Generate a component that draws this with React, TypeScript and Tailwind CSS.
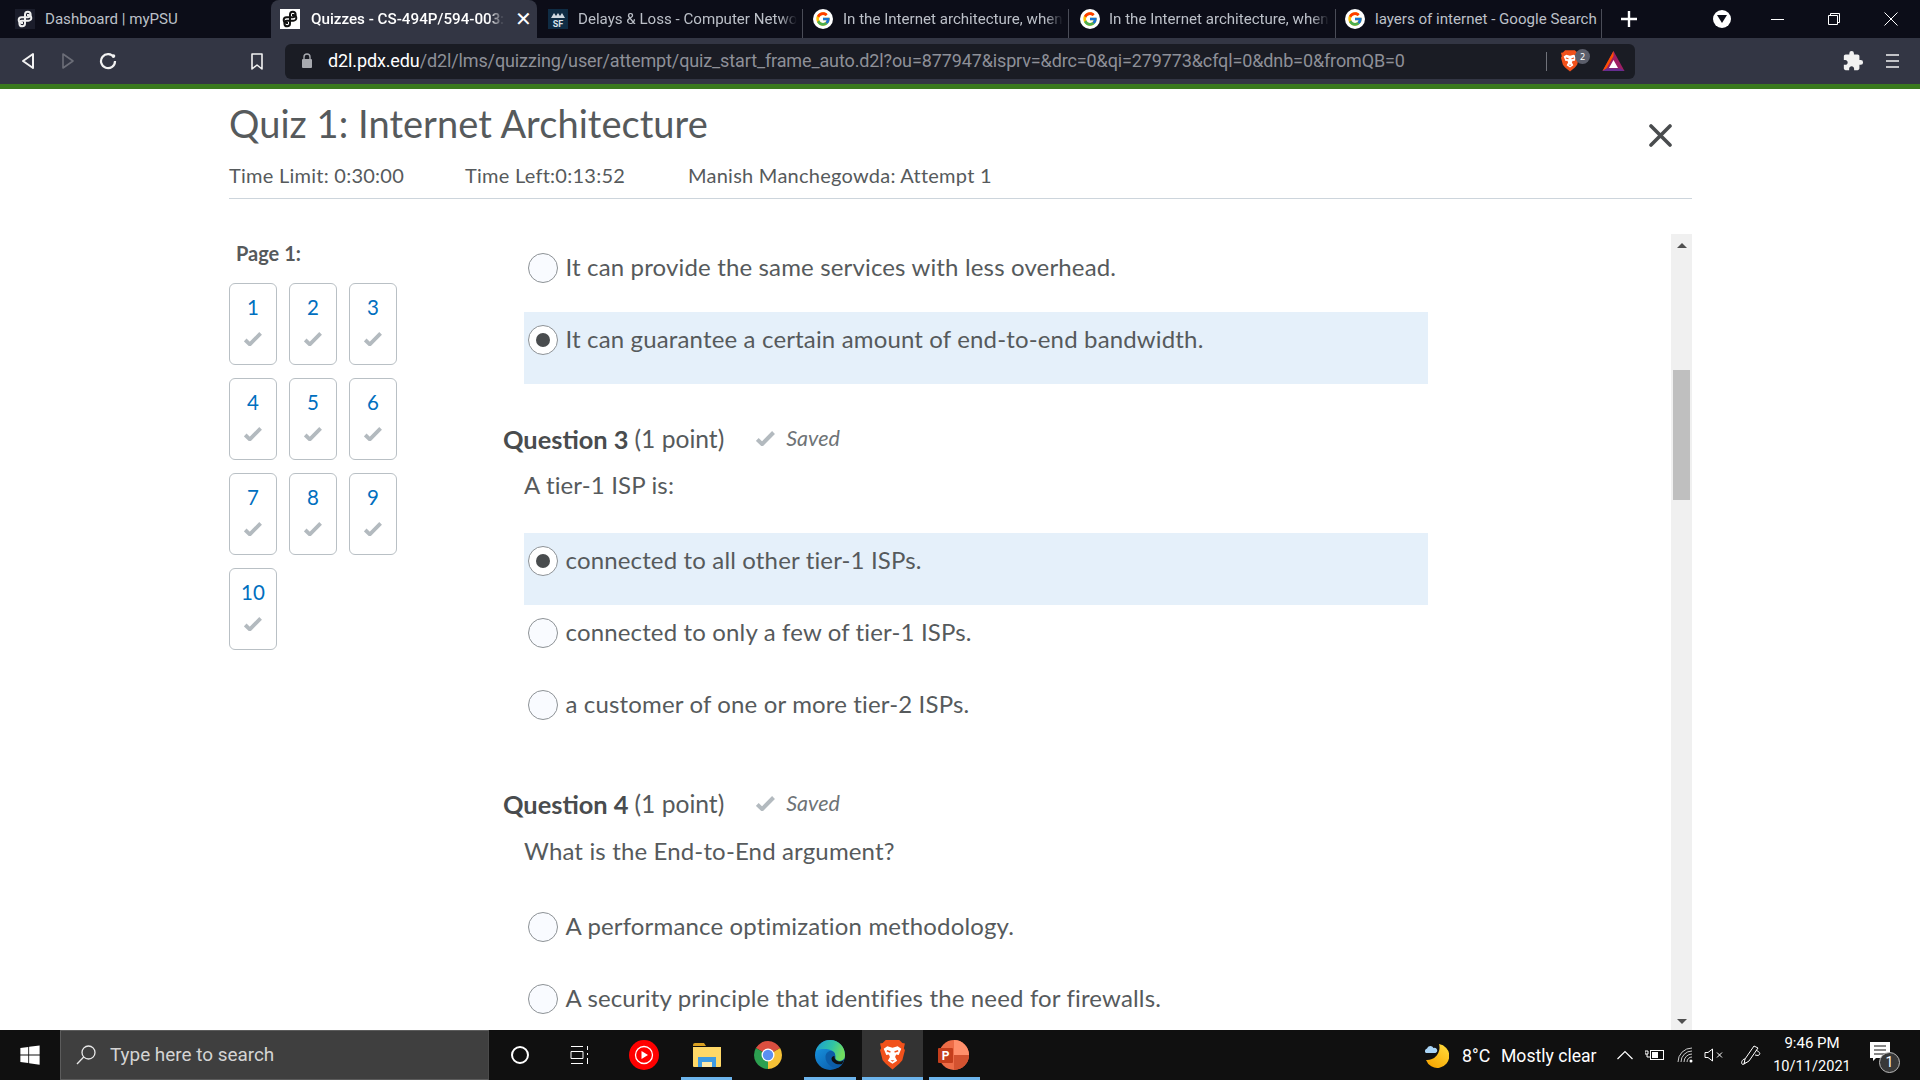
import React from "react";
import { FcGoogle } from "react-icons/fc";
import { FaWindows } from "react-icons/fa";
import { MdExtension } from "react-icons/md";

const lato = "font-['Lato','Open_Sans',sans-serif]";
const ui = "font-['Roboto','Noto_Sans',sans-serif]";

function PsuLogo({ color, bg, size = 20 }: { color: string; bg: string; size?: number }) {
  return (
    <svg width={size} height={size} viewBox="0 0 20 20" style={{ background: bg }} className="shrink-0">
      <g fill="none" stroke={color} strokeWidth="2">
        <path d="M10 11V5.500a2.800 2.800 0 1 1 3 2.800H6.500a2.800 2.800 0 1 0 0 5.600H8" />
        <path d="M10 9v5.500a2.800 2.800 0 1 1-3-2.800h6.500a2.800 2.800 0 1 0 0-5.600H12" />
      </g>
    </svg>
  );
}

function SfIcon() {
  return (
    <svg width="20" height="20" viewBox="0 0 20 20" className="shrink-0">
      <rect width="20" height="20" fill="#0f2c44" />
      <path d="M3 9l3-5 2 3 2-3 2 3 2-3 3 5z" fill="#cfd8e0" />
      <text x="10" y="18" textAnchor="middle" fontSize="9" fontWeight="700" fill="#d7e2ea" fontFamily="Roboto">SF</text>
    </svg>
  );
}

function G() {
  return (
    <span className="w-[20px] h-[20px] rounded-full bg-white flex items-center justify-center shrink-0">
      <FcGoogle size={16} />
    </span>
  );
}

function Tab({ w, pl, gap, icon, title, active, close, sep, fade }: { w: number; pl: number; gap: number; icon: React.ReactNode; title: string; active?: boolean; close?: boolean; sep?: boolean; fade?: boolean }) {
  return (
    <div
      style={{ width: w, paddingLeft: pl, gap }}
      className={`h-[38px] flex items-center shrink-0 relative ${active ? "bg-[#333644] rounded-t-[8px]" : ""}`}
    >
      {icon}
      <span
        className={`block mt-[1px] whitespace-nowrap ${ui} ${active ? "text-white font-medium text-[15.2px]" : "text-[#bcc0c8] text-[15.1px]"} ${fade ? "[mask-image:linear-gradient(to_right,black_92%,transparent)]" : ""}`}
      >
        {title}
      </span>
      {close && <span className="absolute left-[244px] top-[9px] text-white text-[20px] leading-[20px]">✕</span>}
      {sep && <span className="absolute right-0 top-[9px] h-[29px] w-px bg-[#4a4c57]" />}
    </div>
  );
}

function TitleBar() {
  return (
    <div className="h-[38px] bg-[#0c0d18] flex items-end shrink-0">
      <Tab w={271} pl={15} gap={10} icon={<PsuLogo color="#efefef" bg="#1b1d2b" />} title="Dashboard | myPSU" />
      <Tab w={266} pl={9} gap={11} active close fade icon={<PsuLogo color="#111" bg="#fff" />} title="Quizzes - CS-494P/594-003:" />
      <Tab w={266} pl={11} gap={10} sep fade icon={<SfIcon />} title="Delays & Loss - Computer Netwo" />
      <Tab w={266} pl={10} gap={10} sep fade icon={<G />} title="In the Internet architecture, when" />
      <Tab w={267} pl={11} gap={9} sep fade icon={<G />} title="In the Internet architecture, when" />
      <Tab w={266} pl={9} gap={10} sep icon={<G />} title="layers of internet - Google Search" />
      <div className="w-[54px] flex justify-center items-center h-[38px] shrink-0">
        <svg width="16" height="16" viewBox="0 0 16 16"><path d="M8 0v16M0 8h16" stroke="#fff" strokeWidth="2.4" /></svg>
      </div>
      <div className="flex-1 flex justify-center items-center h-[38px] pl-[40px]">
        <span className="w-[18px] h-[18px] rounded-full bg-white flex items-center justify-center">
          <svg width="10" height="8" viewBox="0 0 10 8"><path d="M0 0h10L5 8z" fill="#0c0d18" /></svg>
        </span>
      </div>
      <div className="w-[58px] h-[38px] flex items-center justify-center">
        <span className="w-[13px] h-px bg-white" />
      </div>
      <div className="w-[56px] h-[38px] flex items-center justify-center">
        <svg width="14" height="14" viewBox="0 0 14 14" fill="none" stroke="#fff"><path d="M1.500 3.500h9v9h-9zM3.500 3.500v-2h9v9h-2" /></svg>
      </div>
      <div className="w-[58px] h-[38px] flex items-center justify-center">
        <svg width="14" height="14" viewBox="0 0 14 14" stroke="#fff"><path d="M.5.5l13 13M13.500.5l-13 13" /></svg>
      </div>
    </div>
  );
}

function BraveIcon({ w = 18, h = 22 }: { w?: number; h?: number }) {
  return (
    <svg width={w} height={h} viewBox="0 0 24 29" className="shrink-0">
      <path d="M5.500 0h13l3 3 2.500.5-1 4.500 1 2-2.500 9.500-3 3.500-6.500 5.500-6.500-5.500-3-3.500L0 10l1-2L0 3.500 2.500 3z" fill="#f1511b" />
      <path d="M7 6l5 1.500L17 6l3.500 2.500-2.500 6-2.500-.5-1 2.500 2 3.500-4.500 3-4.500-3 2-3.500-1-2.500-2.500.5-2.500-6z" fill="#fff" />
      <path d="M6.500 10.500l3.500 1M17.500 10.500l-3.500 1" stroke="#f1511b" strokeWidth="1.500" />
      <path d="M10 19.500h4l-2 1.500z" fill="#f1511b" />
    </svg>
  );
}

function Toolbar() {
  return (
    <div className="h-[46px] bg-[#333644] flex items-center shrink-0">
      <div className="w-[285px] flex items-center h-full shrink-0">
        <span className="ml-[21px] w-[40px]">
          <svg width="14" height="18" viewBox="0 0 14 18" fill="none" stroke="#f2f2f2" strokeWidth="2"><path d="M12 2v14L2 9z" strokeLinejoin="round" /></svg>
        </span>
        <span className="w-[38px]">
          <svg width="14" height="18" viewBox="0 0 14 18" fill="none" stroke="#6c6e78" strokeWidth="1.600"><path d="M2 2v14l10-7z" strokeLinejoin="round" /></svg>
        </span>
        <span className="w-[152px]">
          <svg width="18" height="18" viewBox="0 0 18 18" fill="none" stroke="#f2f2f2" strokeWidth="2.200"><path d="M15 5.500A7 7 0 1 0 16 9" /><circle cx="14.500" cy="4" r="1.800" fill="#f2f2f2" stroke="none" /></svg>
        </span>
        <span>
          <svg width="12" height="17" viewBox="0 0 12 17" fill="none" stroke="#f2f2f2" strokeWidth="1.600"><path d="M1 1h10v15l-5-4-5 4z" strokeLinejoin="round" /></svg>
        </span>
      </div>
      <div className="w-[1350px] h-[35px] bg-[#1a1c24] rounded-[6px] flex items-center shrink-0">
        <svg width="12" height="16" viewBox="0 0 12 16" className="ml-[16px] mr-[15px] shrink-0"><rect x="1" y="6" width="10" height="9" rx="1" fill="#a7a9af" /><path d="M3 6V4a3 3 0 0 1 6 0v2" stroke="#a7a9af" strokeWidth="1.400" fill="none" /></svg>
        <span className={`${ui} flex-1 pb-[2px] text-[18px] tracking-[-0.12px] whitespace-nowrap text-[#8e9098]`}>
          <span className="text-white">d2l.pdx.edu</span>/d2l/lms/quizzing/user/attempt/quiz_start_frame_auto.d2l?ou=877947&isprv=&drc=0&qi=279773&cfql=0&dnb=0&fromQB=0
        </span>
        <span className="h-[19px] w-px bg-[#70727a] shrink-0" />
        <span className="relative ml-[14px] flex shrink-0">
          <BraveIcon />
          <span className="absolute left-[14px] top-[-1px] w-[15px] h-[15px] rounded-full bg-[#5b5e6b] text-white text-[9px] flex items-center justify-center">2</span>
        </span>
        <svg width="23" height="20" viewBox="0 0 22 20" className="ml-[23px] mr-[10px] shrink-0"><path d="M11 0l11 20H0z" fill="#9e1f63" /><path d="M11 0L0 20l4-2.500L11 5z" fill="#ff5000" /><path d="M0 20h22l-4-2.500H4z" fill="#662d91" /><path d="M11 9l4.500 8h-9z" fill="#fff" /></svg>
      </div>
      <span className="ml-[207px] text-[#f2f2f2]"><MdExtension size={22} /></span>
      <span className="ml-[22px]">
        <svg width="13" height="14" viewBox="0 0 13 14" stroke="#f2f2f2" strokeWidth="1.600"><path d="M0 1h13M0 7h13M0 13h13" /></svg>
      </span>
    </div>
  );
}

function Check({ w = 18, c = "#b3babf" }: { w?: number; c?: string }) {
  return (
    <svg width={w} height={w * 0.8} viewBox="0 0 18 14.400" fill="none" stroke={c} strokeWidth="3.800"><path d="M1.200 8l4.600 4.400L16.600 1.400" /></svg>
  );
}

function NavBox({ n }: { n: number }) {
  return (
    <div className="w-[48px] h-[82px] rounded-[6px] border border-[#b9c0c5] flex flex-col items-center pt-[9px]">
      <span className="text-[#006fbf] text-[20.5px] leading-[28px]">{n}</span>
      <span className="mt-[11px]"><Check /></span>
    </div>
  );
}

function Option({ text, selected }: { text: string; selected?: boolean }) {
  return (
    <div className={`h-[72px] ml-[21px] w-[904px] flex items-start pl-[4px] pt-[13px] ${selected ? "bg-[#e5f0fa]" : ""}`}>
      <span className={`w-[30px] h-[30px] rounded-full border border-[#8d9296] flex items-center justify-center shrink-0 ${selected ? "bg-white" : "bg-[#f9fbff]"}`}>
        {selected && <span className="w-[14px] h-[14px] rounded-full bg-[#494c4e]" />}
      </span>
      <span className="ml-[7.5px] mt-[-1px] text-[24px] tracking-[0.15px] leading-[30px] text-[#565a5c]">{text}</span>
    </div>
  );
}

function QHead({ n, className }: { n: number; className: string }) {
  return (
    <div className={`flex items-center h-[32px] text-[#494c4e] ${className}`}>
      <b className="font-bold text-[25.4px]">Question {n}</b>
      <span className="ml-[6px] text-[#565a5c] text-[24.6px]">(1 point)</span>
      <span className="ml-[32px] mt-[-1px]"><Check w={19} /></span>
      <i className="ml-[11px] mt-[-2px] text-[21.5px] text-[#6e7376]">Saved</i>
    </div>
  );
}

function QText({ text, className }: { text: string; className: string }) {
  return <div className={`ml-[21px] h-[32px] leading-[32px] text-[24px] tracking-[0.15px] text-[#565a5c] ${className}`}>{text}</div>;
}

function Page() {
  return (
    <div className={`flex-1 bg-white min-h-0 overflow-hidden ${lato}`}>
      <div className="ml-[229px] w-[1463px] h-full flex flex-col">
        <div className="h-[110px] border-b border-[#cdd5dc] relative shrink-0">
          <h1 className="text-[38px] tracking-[0.05px] leading-[46px] text-[#565a5c] pt-[11px] h-[57px]">Quiz 1: Internet Architecture</h1>
          <div className="flex mt-[17px] text-[20px] leading-[24px] text-[#565a5c] tracking-[0.25px]">
            <span className="w-[236px]">Time Limit: 0:30:00</span>
            <span className="w-[223px]">Time Left:0:13:52</span>
            <span>Manish Manchegowda: Attempt 1</span>
          </div>
          <span className="absolute left-[1420px] top-[35px]">
            <svg width="23" height="23" viewBox="0 0 23 23" stroke="#494c4e" strokeWidth="3.600" strokeLinecap="round"><path d="M2 2l19 19M21 2L2 21" /></svg>
          </span>
        </div>
        <div className="flex mt-[35px] flex-1 min-h-0">
          <div className="w-[274px] shrink-0">
            <div className="ml-[7px] mt-[7px] text-[#565a5c] font-bold text-[20px] leading-[24px]">Page 1:</div>
            <div className="grid grid-cols-[48px_48px_48px] gap-x-[12px] gap-y-[13px] mt-[18px]">
              {[1, 2, 3, 4, 5, 6, 7, 8, 9, 10].map((n) => <NavBox key={n} n={n} />)}
            </div>
          </div>
          <div className="flex-1 overflow-hidden pt-[6px]">
            <Option text="It can provide the same services with less overhead." />
            <Option text="It can guarantee a certain amount of end-to-end bandwidth." selected />
            <QHead n={3} className="mt-[39px]" />
            <QText text="A tier-1 ISP is:" className="mt-[14px]" />
            <div className="mt-[32px]">
              <Option text="connected to all other tier-1 ISPs." selected />
              <Option text="connected to only a few of tier-1 ISPs." />
              <Option text="a customer of one or more tier-2 ISPs." />
            </div>
            <QHead n={4} className="mt-[39px]" />
            <QText text="What is the End-to-End argument?" className="mt-[15px]" />
            <div className="mt-[32px]">
              <Option text="A performance optimization methodology." />
              <Option text="A security principle that identifies the need for firewalls." />
            </div>
          </div>
          <div className="w-[21px] bg-[#f0f0f0] shrink-0 flex flex-col items-center relative">
            <svg width="10" height="5" viewBox="0 0 10 5" className="mt-[9px]"><path d="M5 0l5 5H0z" fill="#505050" /></svg>
            <div className="w-[17px] h-[130px] bg-[#bfbfbf] mt-[122px]" />
            <svg width="10" height="5" viewBox="0 0 10 5" className="absolute bottom-[6px]"><path d="M0 0h10L5 5z" fill="#505050" /></svg>
          </div>
        </div>
      </div>
    </div>
  );
}

function TaskIcon({ w, children, on, full, hl }: { w: number; children?: React.ReactNode; on?: boolean; full?: boolean; hl?: boolean }) {
  return (
    <div style={{ width: w }} className={`h-[50px] flex items-center justify-center relative shrink-0 ${hl ? "bg-[#333333]" : ""}`}>
      {children}
      {on && <span className={`absolute bottom-0 h-[3px] bg-[#6cb4ec] ${full ? "left-0 right-0" : "left-[4px] right-[4px]"}`} />}
    </div>
  );
}

function Taskbar() {
  return (
    <div className="h-[50px] bg-[#101010] flex items-center shrink-0 text-white">
      <div className="w-[60px] flex justify-center"><FaWindows size={22} /></div>
      <div className={`w-[429px] h-[50px] bg-[#3f3f3f] border border-[#5c5c5c] border-r-[#4a4a4a] flex items-center ${ui}`}>
        <svg width="22" height="22" viewBox="0 0 22 22" fill="none" stroke="#e8e8e8" strokeWidth="1.300" className="ml-[14px]"><circle cx="13.500" cy="8.500" r="6.500" /><path d="M8.700 13L2 20" /></svg>
        <span className="ml-[13px] text-[18.9px] text-[#d4d4d4]">Type here to search</span>
      </div>
      <div className="w-[62px] flex justify-center"><span className="w-[18px] h-[18px] rounded-full border-[2.500px] border-white" /></div>
      <div className="w-[57px] flex justify-center">
        <svg width="20" height="20" viewBox="0 0 20 20" fill="none" stroke="#fff"><path d="M1 1.500h12M1 6.500h12v7H1zM1 18.500h12M17.500 1v4M17.500 8v2M17.500 13v6" /></svg>
      </div>
      <TaskIcon w={69}>
        <svg width="30" height="30" viewBox="0 0 30 30" className="ml-[3px]"><circle cx="15" cy="15" r="15" fill="#f00" /><circle cx="15" cy="15" r="8.500" fill="none" stroke="#fff" strokeWidth="1.300" /><path d="M12.500 11l6.500 4-6.500 4z" fill="#fff" /></svg>
      </TaskIcon>
      <TaskIcon w={59} on>
        <svg width="28" height="24" viewBox="0 0 28 24"><path d="M0 2a2 2 0 0 1 2-2h9l2 3H0z" fill="#d9a021" /><path d="M0 4h28v19a1 1 0 0 1-1 1H1a1 1 0 0 1-1-1z" fill="#ffd867" /><path d="M5 24V14h18v10h-4v-5H9v5z" fill="#3f9be2" /><rect x="9" y="19" width="10" height="5" fill="#ffe9a8" /></svg>
      </TaskIcon>
      <TaskIcon w={64}>
        <svg width="28" height="28" viewBox="0 0 28 28"><path d="M14 14L1.880 7A14 14 0 0 1 26.120 7z" fill="#db4f40" /><path d="M14 14L26.120 7A14 14 0 0 1 14 28z" fill="#f6c136" /><path d="M14 14L14 28A14 14 0 0 1 1.880 7z" fill="#2c9f50" /><circle cx="14" cy="14" r="6.500" fill="#fff" /><circle cx="14" cy="14" r="5.200" fill="#5b8ff0" /></svg>
      </TaskIcon>
      <TaskIcon w={60} on>
        <svg width="30" height="30" viewBox="0 0 30 30">
          <defs>
            <linearGradient id="edgeTop" x1="0" y1="0" x2="1" y2="0.300"><stop offset="0" stopColor="#1b9bd6" /><stop offset="0.600" stopColor="#31c4a4" /><stop offset="1" stopColor="#6fdc5f" /></linearGradient>
            <linearGradient id="edgeBody" x1="0" y1="0" x2="0.800" y2="1"><stop offset="0" stopColor="#1a9ce8" /><stop offset="1" stopColor="#0a5aa8" /></linearGradient>
          </defs>
          <circle cx="15" cy="15" r="15" fill="url(#edgeBody)" />
          <path d="M1 11C3 4 9 0 15 0c9 0 15 7 15 15 0 3-1 6-5 6h-6c3-3 2-10-5-11.500C9 8.500 4 9 1 11z" fill="url(#edgeTop)" />
          <path d="M10.500 17c0-4 3-6.500 6-6 3 .5 4 3 3.500 5-.5 2 1 5 5 5 2 0 3.500-1 4.500-3-1 6-4 9-7 10-7 0-12-5-12-11z" fill="#0c5da8" />
          <path d="M19.500 16c-.3 3 2 5.500 5.500 5.500 1.500 0 3-.5 4-2-.5 1.500-1 3-2 4.500-5 1-10-1-10.500-5-.2-1.500 1-3 3-3z" fill="#101010" />
        </svg>
      </TaskIcon>
      <TaskIcon w={2} />
      <TaskIcon w={61} on full hl><BraveIcon w={25} h={30} /></TaskIcon>
      <TaskIcon w={6} />
      <TaskIcon w={51} on full>
        <svg width="32" height="30" viewBox="0 0 32 30" className="mr-[4px]"><circle cx="17" cy="15" r="15" fill="#ed6c47" /><path d="M17 0a15 15 0 0 1 15 15H17z" fill="#ff8f6b" /><path d="M17 15h15a15 15 0 0 1-15 15z" fill="#d35230" /><rect x="1" y="8" width="15" height="15" rx="1" fill="#c43e1c" /><text x="8.500" y="20" textAnchor="middle" fontSize="12" fontWeight="700" fill="#fff" fontFamily="Roboto">P</text></svg>
      </TaskIcon>
      <div className={`flex-1 flex items-center h-full ${ui}`}>
        <svg width="24" height="25" viewBox="0 0 24 25" className="ml-[445px] shrink-0">
          <defs>
            <linearGradient id="moon" x1="0.900" y1="0" x2="0.200" y2="1"><stop offset="0" stopColor="#ffdc3c" /><stop offset="1" stopColor="#f7a400" /></linearGradient>
          </defs>
          <path d="M14 1A12 12 0 1 1 1 17 A12.500 12.500 0 0 0 14 1z" fill="url(#moon)" />
          <path d="M1 10a2.500 2.500 0 0 1 1-4.500A3.500 3.500 0 0 1 8.500 5 2.500 2.500 0 0 1 10.500 10z" fill="#a9d4f5" />
        </svg>
        <span className="ml-[13px] w-[39px] text-[17.8px] leading-[24px] mt-[2px]">8°C</span>
        <span className="w-[96px] text-[17.6px] leading-[24px] mt-[2px] whitespace-nowrap">Mostly clear</span>
        <svg width="16" height="10" viewBox="0 0 16 10" className="ml-[20px]" fill="none" stroke="#fff" strokeWidth="1.200"><path d="M.5 9L8 1.500 15.500 9" /></svg>
        <svg width="20" height="12" viewBox="0 0 20 12" className="ml-[12px]" fill="none" stroke="#fff"><rect x="5.500" y="1.500" width="13" height="9" /><rect x="7" y="3" width="6" height="6" fill="#fff" stroke="none" /><path d="M0 2h3v3H0zM2 5v3h4" /></svg>
        <svg width="18" height="16" viewBox="0 0 18 16" className="ml-[12px]" fill="none" stroke="#ccc" strokeWidth="1"><path d="M1 15A14 14 0 0 1 15 1M4 15A11 11 0 0 1 15 4M7 15a8 8 0 0 1 8-8M10 15a5 5 0 0 1 5-5" /><circle cx="14" cy="14" r="1.500" fill="#fff" stroke="none" /></svg>
        <svg width="20" height="14" viewBox="0 0 20 14" className="ml-[9px]" fill="none" stroke="#fff"><path d="M1 4.500h3L8.500 1v12L4 9.500H1zM13 4.500l5 5M18 4.500l-5 5" /></svg>
        <svg width="22" height="22" viewBox="0 0 22 22" className="ml-[16px]" fill="none" stroke="#fff"><path d="M14 2l4 2-9 13-5 3 1-5zM16 6c3 2 5 3 3 5-1 1-3 0-4 0M5 15c-3 0-4 4-3 5 1 1 3 0 3-2" /></svg>
        <div className="ml-[8px] w-[84px] flex flex-col items-center leading-[23.5px]">
          <span className="text-[15px]">9:46 PM</span>
          <span className="text-[14.6px]">10/11/2021</span>
        </div>
        <span className="ml-[16px] relative mt-[-6px]">
          <svg width="20" height="20" viewBox="0 0 20 20" className="block"><path d="M0 0h20v16H6l-3 3v-3H0z" fill="#fff" /><path d="M4 4h12M4 8h12M4 12h12" stroke="#101010" /></svg>
          <span className="absolute left-[9px] top-[10px] w-[21px] h-[21px] rounded-full bg-[#383838] border border-[#bbb] text-[14px] flex items-center justify-center">1</span>
        </span>
      </div>
    </div>
  );
}

export default function App() {
  return (
    <div className="w-[1920px] h-[1080px] flex flex-col overflow-hidden">
      <TitleBar />
      <Toolbar />
      <div className="h-[5px] bg-[#3a7a1e] shrink-0" />
      <Page />
      <Taskbar />
    </div>
  );
}
